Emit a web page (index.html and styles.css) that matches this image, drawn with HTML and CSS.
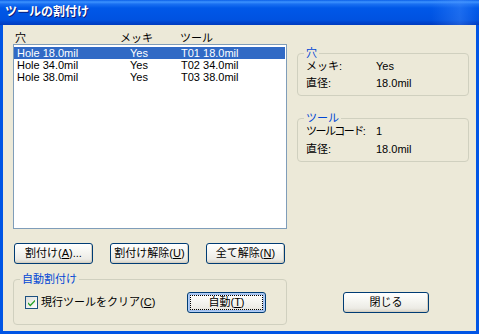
FILE: index.html
```html
<!DOCTYPE html>
<html lang="ja">
  <head>
    <meta charset="UTF-8" />
    <title>ツールの割付け</title>
    <link rel="stylesheet" href="styles.css">
  </head>

  <body>
    <div class="window">
      <div class="titlebar">ツールの割付け</div>

      <div class="frame">
        <div class="layout">
          <div class="left">
            <div class="list-head">
              <span>穴</span>
              <span>メッキ</span>
              <span>ツール</span>
            </div>
            <div class="listbox">
              <div class="row selected"><span>Hole 18.0mil</span><span>Yes</span><span>T01 18.0mil</span></div>
              <div class="row"><span>Hole 34.0mil</span><span>Yes</span><span>T02 34.0mil</span></div>
              <div class="row"><span>Hole 38.0mil</span><span>Yes</span><span>T03 38.0mil</span></div>
            </div>
            <div class="btn-row">
              <button class="btn">割付け(<u>A</u>)...</button>
              <button class="btn">割付け解除(<u>U</u>)</button>
              <button class="btn">全て解除(<u>N</u>)</button>
            </div>
          </div>

          <div class="right">
            <div class="group hole">
              <div class="group-title">穴</div>
              <div class="info">
                <div class="info-row"><span class="label">メッキ:</span><span>Yes</span></div>
                <div class="info-row"><span class="label">直径:</span><span>18.0mil</span></div>
              </div>
            </div>
            <div class="group tool">
              <div class="group-title">ツール</div>
              <div class="info">
                <div class="info-row"><span class="label narrow">ツールコード:</span><span>1</span></div>
                <div class="info-row"><span class="label">直径:</span><span>18.0mil</span></div>
              </div>
            </div>
          </div>

          <div class="group auto">
            <div class="group-title">自動割付け</div>
            <div class="auto-row">
              <label class="check">
                <svg width="13" height="13" viewBox="0 0 13 13">
                  <defs>
                    <linearGradient id="cb" x1="0" y1="0" x2="1" y2="1">
                      <stop offset="0" stop-color="#dcdcd7" />
                      <stop offset="1" stop-color="#ffffff" />
                    </linearGradient>
                  </defs>
                  <rect x="0.5" y="0.5" width="12" height="12" fill="url(#cb)" stroke="#1c5180" />
                  <path d="M3 6.2 L5.3 8.6 L10 3.8 L10 5.6 L5.3 10.4 L3 8 Z" fill="#21a121" />
                </svg>
                <span>現行ツールをクリア(<u>C</u>)</span>
              </label>
              <button class="btn default">自動(<u>T</u>)</button>
            </div>
          </div>

          <div class="close-cell">
            <button class="btn close">閉じる</button>
          </div>
        </div>
      </div>
    </div>
  </body>
</html>
```

FILE: styles.css
```css
* {
  margin: 0;
  padding: 0;
  box-sizing: border-box;
}

body {
  background-color: #ece9d8;
  font-family: "Liberation Sans", "Noto Sans CJK JP", sans-serif;
  font-size: 11px;
  line-height: 13px;
  color: #000000;
}

.window {
  width: 479px;
  height: 334px;
}

.titlebar {
  height: 25px;
  padding: 6px 0 0 5px;
  color: #ffffff;
  font-weight: 700;
  font-size: 12px;
  text-shadow: 1px 1px 0 #0a1c7a;
  background: linear-gradient(to right, rgba(0, 0, 0, 0) 90%, rgba(80, 150, 255, 0.35) 96%, rgba(0, 0, 0, 0) 100%),
    linear-gradient(#0a5ee8 0px, #3d93ff 2px, #1a70f2 4px, #0058e8 8px, #0054e3 16px, #0052e0 20px, #0046d0 22px, #003bbf 25px);
}

.frame {
  height: 309px;
  border: 3px solid #0055e5;
  border-top: none;
  background-color: #ece9d8;
}

.layout {
  display: grid;
  grid-template-columns: 274px 172px;
  column-gap: 10px;
  row-gap: 15px;
  padding: 7px 0 0 10px;
}

/* list */

.list-head {
  display: grid;
  grid-template-columns: 105px 60px auto;
  height: 12px;
  padding-left: 2px;
  line-height: 12px;
}

.listbox {
  height: 185px;
  border: 1px solid #7f9db9;
  background-color: #ffffff;
  padding-top: 2px;
}

.row {
  display: grid;
  grid-template-columns: 113px 51px auto;
  height: 12px;
  line-height: 12px;
  padding-left: 3px;
  margin-right: 1px;
}

.row.selected {
  background-color: #316ac5;
  color: #ffffff;
}

.btn-row {
  display: flex;
  justify-content: space-between;
  margin-top: 14px;
  padding: 0 2px 0 1px;
}

/* buttons */

.btn {
  width: 79px;
  height: 21px;
  font-family: "Liberation Sans", "Noto Sans CJK JP", sans-serif;
  font-size: 11px;
  line-height: 13px;
  color: #000000;
  border: 1px solid #003c74;
  border-radius: 3px;
  background: linear-gradient(#ffffff 0%, #f6f6f2 40%, #ecebe5 80%, #d8d4c8 100%);
  box-shadow: inset -1px -1px 0 #d6d0c2;
  cursor: pointer;
}

.btn.default {
  box-shadow: inset 0 0 0 1px #b2cdf4, inset 0 0 0 2px #a0bfef;
  outline: 1px dotted #000000;
  outline-offset: -4px;
}

.btn.close {
  width: 86px;
}

/* group boxes */

.group {
  border: 1px solid #d0d0bf;
  border-radius: 4px;
  padding: 0 8px 5px 6px;
}

.group-title {
  width: fit-content;
  margin-top: -7px;
  padding: 0 2px;
  background-color: #ece9d8;
  color: #0046d5;
  line-height: 13px;
}

.right .hole {
  margin-top: 21px;
}

.right .tool {
  margin-top: 22px;
}

.info {
  display: flex;
  flex-direction: column;
  gap: 4px;
  padding-left: 2px;
}

.tool .info {
  gap: 5px;
}

.info-row {
  display: flex;
  height: 13px;
}

.info-row .label {
  flex-shrink: 0;
  width: 70px;
  white-space: nowrap;
}

.info-row .narrow {
  letter-spacing: -1.5px;
}

.auto {
  padding-bottom: 11px;
}

.auto-row {
  display: flex;
  align-items: center;
  margin-top: 6px;
  padding: 0 12px 0 5px;
}

.check {
  display: flex;
  align-items: center;
  gap: 3px;
}

.check svg {
  display: block;
}

.auto-row .btn {
  margin-left: auto;
}

.close-cell {
  padding: 13px 0 0 46px;
}
```
